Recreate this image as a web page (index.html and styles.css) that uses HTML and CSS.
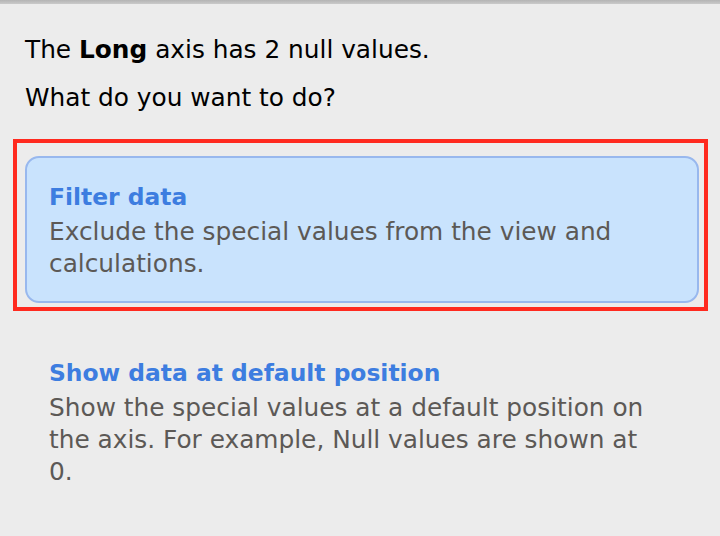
FILE: index.html
```html
<!DOCTYPE html>
<html lang="en">
<head>
<meta charset="UTF-8">
<title>Special Values</title>
<link rel="stylesheet" href="styles.css">
</head>
<body>
<div class="topbar"></div>
<div class="dialog">
    <p class="msg">The <b>Long</b> axis has 2 null values.</p>
    <p class="msg">What do you want to do?</p>

    <div class="focus">
        <div class="option selected">
            <div class="title">Filter data</div>
            <div class="desc">Exclude the special values from the view and calculations.</div>
        </div>
    </div>

    <div class="option plain">
        <div class="title">Show data at default position</div>
        <div class="desc">Show the special values at a default position on the axis. For example, Null values are shown at 0.</div>
    </div>
</div>
</body>
</html>
```

FILE: styles.css
```css
*{margin:0;padding:0;box-sizing:border-box;}
body
{
    background: #ececec;
    font-family: "DejaVu Sans", Verdana, sans-serif;
    font-size: 24.8px;
    width: 720px;
    height: 536px;
    overflow: hidden;
}
.topbar
{
    height: 4px;
    background: linear-gradient(#b4b4b4, #cacaca);
}
.dialog
{
    padding-top: 22px;
}
.msg
{
    color: #000;
    padding-left: 25px;
    line-height: 48px;
    height: 48px;
    white-space: nowrap;
}
.msg b
{
    font-weight: bold;
}
.focus
{
    margin: 17px 0 0 13px;
    width: 695px;
    border: 4px solid #ff2a1f;
    padding: 13px 5px 4px 8px;
}
.selected
{
    height: 147px;
    background: #c9e3fd;
    border: 2px solid #98b8ee;
    border-radius: 14px;
    padding: 22.5px 0 0 22px;
}
.plain
{
    margin-top: 46px;
    padding-left: 49px;
    width: 659px;
}
.title
{
    color: #3d7de0;
    font-size: 23.4px;
    font-weight: bold;
    line-height: 32px;
}
.desc
{
    color: #5c5956;
    line-height: 32px;
    margin-top: 3px;
}
```
